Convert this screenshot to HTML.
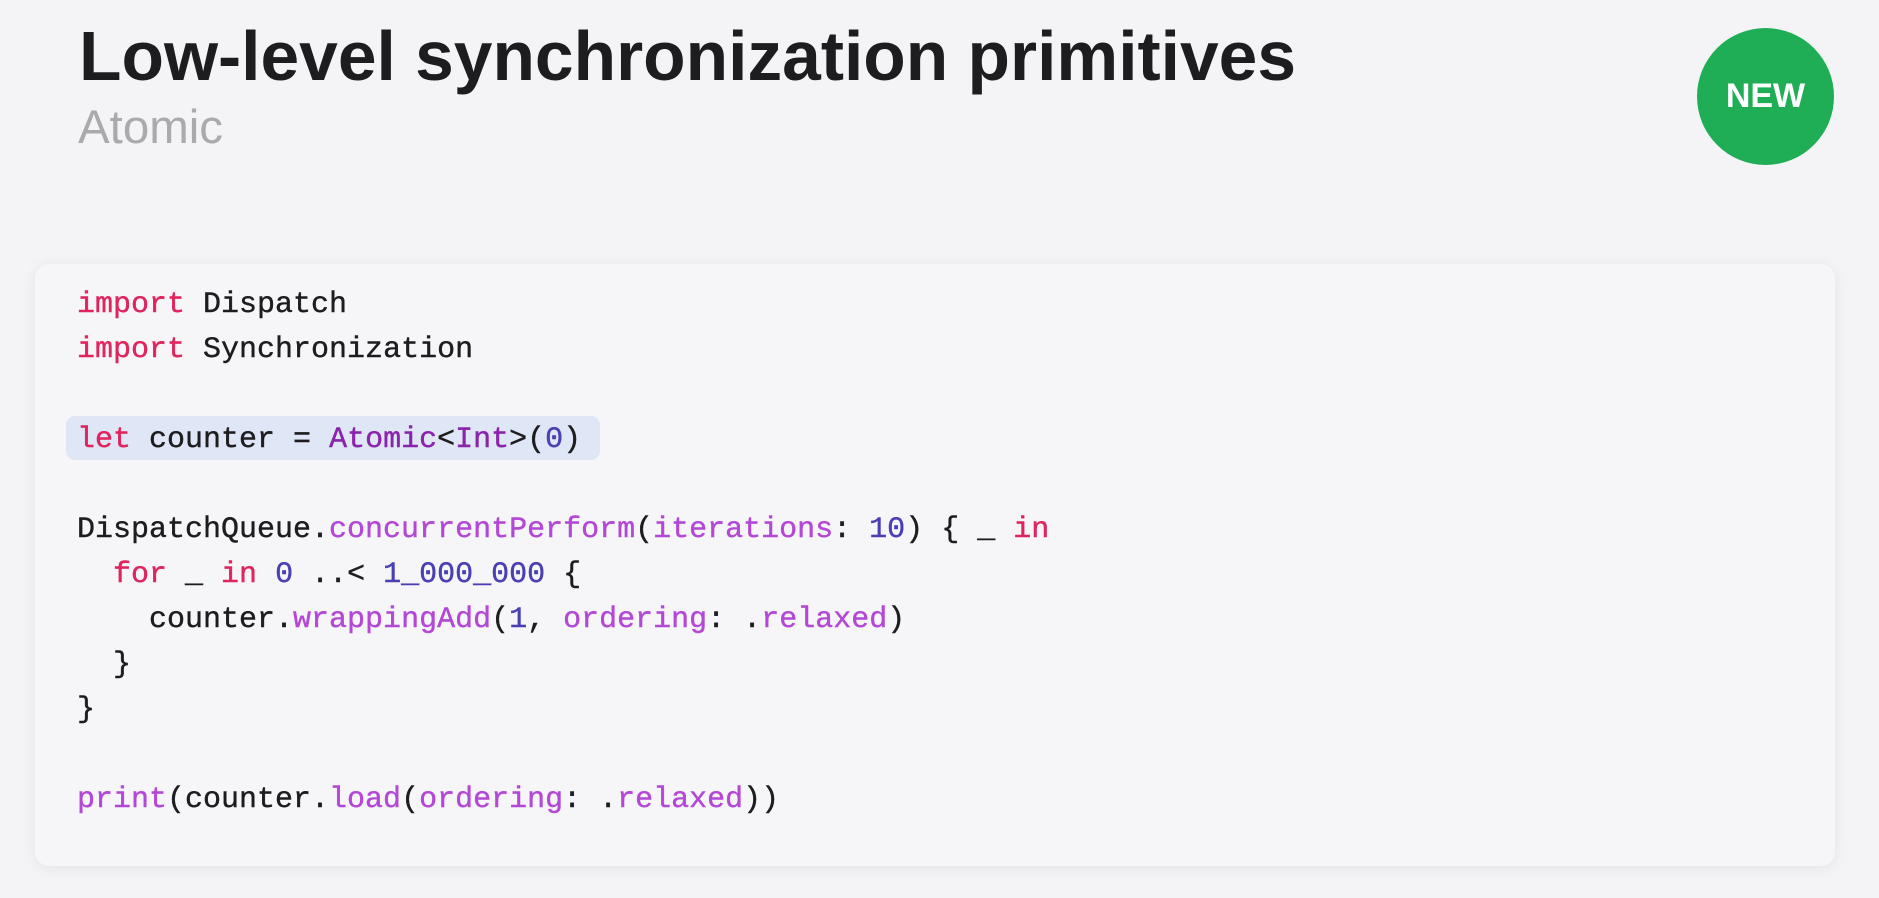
<!DOCTYPE html>
<html><head><meta charset="utf-8"><style>
html,body{margin:0;padding:0;width:1879px;height:898px;background:#f4f4f6;overflow:hidden;}
.card{position:absolute;left:35px;top:264px;width:1800px;height:602px;background:#f6f6f8;border-radius:14px;box-shadow:0 2px 14px rgba(0,0,0,0.07);}
.hl{position:absolute;left:66px;top:416px;width:534px;height:44px;background:#dfe6f5;border-radius:9px;}
pre{position:absolute;left:77px;top:283px;margin:0;font-family:"Liberation Mono",monospace;font-size:30px;line-height:45px;color:#1d1d1f;-webkit-text-stroke:0.4px currentColor;}
.k{color:#e0245e}.m{color:#b448d6}.t{color:#8a24ad}.n{color:#4a3fb3}
.new{position:absolute;left:1697px;top:28px;width:137px;height:137px;border-radius:50%;background:#1fae55;color:#fff;font-family:"Liberation Sans",sans-serif;font-weight:bold;font-size:34px;line-height:137px;text-align:center;}
</style></head><body>
<svg width="1879" height="200" style="position:absolute;left:0;top:0">
<text x="79" y="80" font-family="Liberation Sans" font-weight="bold" font-size="70" fill="#1d1d1f" textLength="1217" lengthAdjust="spacingAndGlyphs">Low-level synchronization primitives</text>
<text x="78" y="143" font-family="Liberation Sans" font-size="47" fill="#a9a9ae" textLength="145" lengthAdjust="spacingAndGlyphs">Atomic</text>
</svg>
<div class="new">NEW</div>
<div class="card"></div>
<div class="hl"></div>
<pre><span class="k">import</span> Dispatch
<span class="k">import</span> Synchronization

<span class="k">let</span> counter = <span class="t">Atomic</span>&lt;<span class="t">Int</span>&gt;(<span class="n">0</span>)

DispatchQueue.<span class="m">concurrentPerform</span>(<span class="m">iterations</span>: <span class="n">10</span>) { _ <span class="k">in</span>
  <span class="k">for</span> _ <span class="k">in</span> <span class="n">0</span> ..&lt; <span class="n">1_000_000</span> {
    counter.<span class="m">wrappingAdd</span>(<span class="n">1</span>, <span class="m">ordering</span>: .<span class="m">relaxed</span>)
  }
}

<span class="m">print</span>(counter.<span class="m">load</span>(<span class="m">ordering</span>: .<span class="m">relaxed</span>))</pre>
</body></html>
